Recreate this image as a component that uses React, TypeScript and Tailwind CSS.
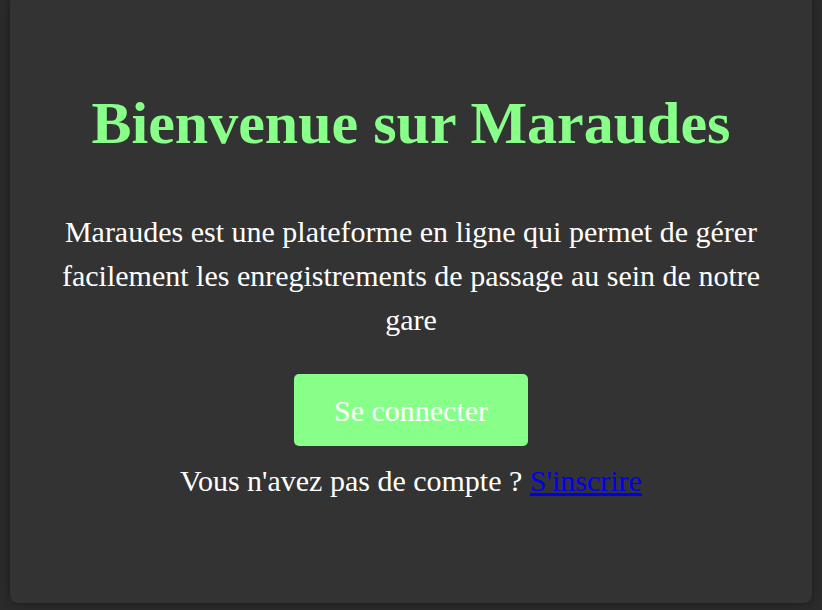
const App = () => {
  return (
    <div className="min-h-[610px] bg-[#2b2b2b] px-[10px] pb-[7px] font-['Liberation_Serif',serif]">
      <div className="flex min-h-[603px] flex-col items-center rounded-b-lg bg-[#333333] px-[48px] pt-[87px] text-center text-white shadow-[0_0_10px_rgba(0,0,0,0.4)]">
        <h1 className="text-[60px] font-bold leading-[72px] text-[#88ff88]">
          Bienvenue sur Maraudes
        </h1>
        <p className="mt-[51px] text-[30px] leading-[44px]">
          Maraudes est une plateforme en ligne qui permet de gérer facilement les
          enregistrements de passage au sein de notre gare
        </p>
        <button className="mt-[32px] h-[72px] rounded-[5px] bg-[#88ff88] px-10 text-[30px] text-white">
          Se connecter
        </button>
        <p className="mt-[17px] text-[30px] leading-[36px]">
          Vous n'avez pas de compte ?{" "}
          <a href="#" className="text-[#0000ee] underline">
            S'inscrire
          </a>
        </p>
      </div>
    </div>
  );
};

export default App;
